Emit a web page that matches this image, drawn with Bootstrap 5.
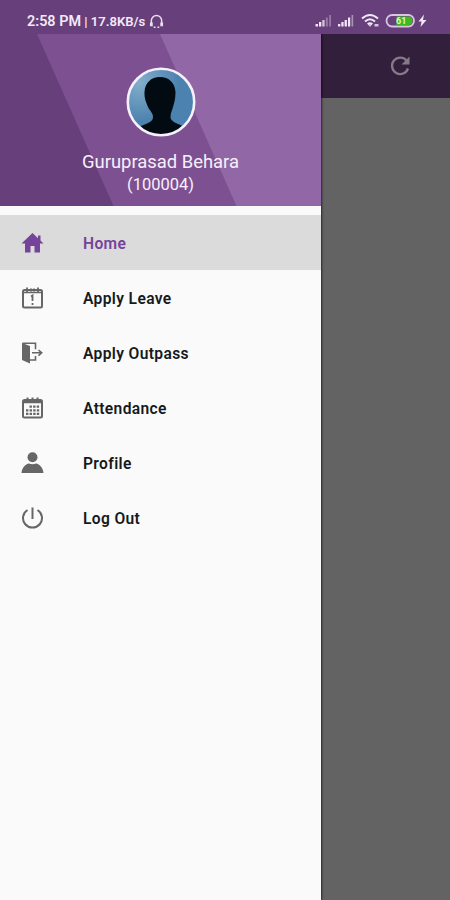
<!DOCTYPE html>
<html lang="en">
<head>
<meta charset="utf-8">
<meta name="viewport" content="width=device-width, initial-scale=1">
<title>Home</title>
<link href="https://cdn.jsdelivr.net/npm/bootstrap@5.3.0/dist/css/bootstrap.min.css" rel="stylesheet">
<style>
body{font-family:Roboto,"Liberation Sans",sans-serif;background:#636363}
.screen{width:450px;height:900px;background:#636363}
.statusbar{height:34px;background:#673f7a;color:#f3e9f8;padding:9px 22px 0 27px;z-index:2}
.clock{font-size:14.4px;line-height:25px;font-weight:600;white-space:pre}
.rate{font-size:13.1px}
.drawer{width:321px;background:#fafafa;box-shadow:1px 0 2px rgba(0,0,0,.6)}
.drawer-head{height:172px;padding-top:33px;color:#f7effb;background:#673f7a}
.stripes{width:321px;height:172px}
.avatar{width:70px;height:70px}
.who{font-size:18.4px;line-height:22px;margin-top:14px}
.code{font-size:16.5px;line-height:24px}
.menu{padding-top:9px}
.menu .list-group-item{height:55px;padding:2px 0 0 20px;background:transparent;color:#161a20;font-size:15.6px;letter-spacing:.36px;font-weight:600}
.menu .list-group-item.active{background:#dbdbdb;color:#75449a}
.menu .list-group-item span{padding-top:2px}
.menu svg{width:25px;height:26px;margin:-2px 38px 0 0;color:#666}
.menu .active svg{color:#75449a}
.topbar{height:64px;background:#321f3b;padding-right:38px}
</style>
</head>
<body>
<div class="screen d-flex flex-column overflow-hidden">
  <header class="statusbar position-relative d-flex justify-content-between align-items-start flex-shrink-0">
    <div class="d-flex align-items-center">
      <span class="clock">2:58 PM<span class="rate"> | 17.8KB/s</span></span>
      <svg class="ms-1" width="15" height="15" viewBox="0 0 16 15" fill="none" stroke="#eadcf1" stroke-width="1.6"><path d="M2.5 9V6.500a5.500 5.500 0 0 1 11 0V9"/><path d="M2.500 8.500v4M13.500 8.500v4" stroke-width="3"/><path d="M5 13.500h2M9 13.500h2"/></svg>
    </div>
    <svg width="114" height="25" viewBox="0 0 114 25" fill="#f0e6f5">
      <path d="M1.500 17.500v-2.500h2.500v2.500zM5 17.500v-4.500h2.300v4.500z"/><path d="M8.300 17.500v-6.500h2.300v6.500z" opacity=".8"/><path d="M11.800 17.500V8.500h2V17.500zM15.200 17.500V6h1.800v11.500z" opacity=".35"/>
      <path d="M24 17.500v-2.500h2.300v2.500zM27.300 17.500v-4.500h2.300v4.500zM30.600 17.500v-6.500h2.300v6.500zM34 17.500V8.500h2.200V17.500z"/><path d="M37.500 17.500V6h1.700v11.500z" opacity=".5"/>
      <g transform="translate(1.500 0)"><g fill="none" stroke="#f0e6f5" stroke-width="2.100"><path d="M46.500 9.500q8-7 16 0M49.500 12.500q5-4.500 10 0M52.200 15.300q2.300-2 4.600 0"/></g>
      <path d="M52.500 15.500h4l-2 2.500zM59 15h4v2.500h-4z" opacity=".8"/></g>
      <g transform="translate(1.500 0)"><rect x="71" y="6" width="27.500" height="11.500" rx="5.700" fill="none" stroke="#d9c4e2" stroke-width="1.800"/>
      <path d="M81 7.500h12a4 4 0 0 1 4 4.200 4 4 0 0 1-4 4.300H81z" fill="#3fb91d"/>
      <text x="80.500" y="15" font-size="9" font-weight="700" fill="#dff5cf">61</text>
      <path d="M108.500 5.500l-5.500 7h3l-1 5.500 6-7h-3.500z"/></g>
    </svg>
  </header>
  <div class="d-flex flex-grow-1">
    <aside class="drawer d-flex flex-column flex-shrink-0 position-relative">
      <div class="drawer-head position-relative d-flex flex-column align-items-center flex-shrink-0">
        <svg class="stripes position-absolute top-0 start-0" viewBox="0 0 321 172"><path d="M37 0H321V172H113.500z" fill="#7d5191"/><path d="M160 0H321V172H236.500z" fill="#9168a5"/></svg>
        <svg class="avatar position-relative flex-shrink-0" viewBox="0 0 70 70">
          <defs><clipPath id="face"><circle cx="35" cy="35" r="32.500"/></clipPath><radialGradient id="sky" cx=".18" cy=".2" r=".6"><stop offset="0" stop-color="#83aecb"/><stop offset="1" stop-color="#4c82af"/></radialGradient></defs>
          <circle cx="35" cy="35" r="33" fill="url(#sky)"/>
          <path clip-path="url(#face)" d="M34 10c-9 0-15 6-15.500 15-.2 7 1.500 10 3.500 15 2 4 5 6 5 10 0 5-5 6-13 9.500v10h45V60c-8-4-14.500-5-14.500-10 0-4 1.500-6 2.500-10 1.500-5 2.500-9 2.500-15C49 16 43 10 34 10z" fill="#020b12"/>
          <circle cx="35" cy="35" r="33.200" fill="none" stroke="#f5f0fa" stroke-width="2.600"/>
        </svg>
        <div class="who position-relative">Guruprasad Behara</div>
        <div class="code position-relative">(100004)</div>
      </div>
      <nav class="menu list-group list-group-flush">
        <a class="list-group-item active border-0 d-flex align-items-center"><svg viewBox="0 0 25 26"><path fill="currentColor" d="M12.500 3L1.500 13.500h3.500V22.500h5.500V16h4v6.500H20v-9h3.500L20.500 10.500V5.500h-2.500v2.700z"/></svg><span>Home</span></a>
        <a class="list-group-item border-0 d-flex align-items-center"><svg viewBox="0 0 25 26" fill="none" stroke="currentColor"><rect x="3" y="5" width="19" height="17.500" rx="1.500" stroke-width="2"/><path d="M3 7.500h19" stroke-width="1.500"/><path d="M7 2.500v5M18 2.500v5M11 3.500v3M14 3.500v3" stroke-width="1.800"/><path d="M11 11.500l1.500-1V16M12.500 18v2" stroke-width="1.800"/></svg><span>Apply Leave</span></a>
        <a class="list-group-item border-0 d-flex align-items-center"><svg viewBox="0 0 25 26" fill="none" stroke="currentColor"><path d="M2 3l8 3v17.500l-8-3.500z" fill="currentColor" stroke="none"/><path d="M2.500 3.200H15.500v6M15.500 16v4H10M12 12.800h9M18.500 10l3.200 2.800-3.200 2.800" stroke-width="1.600"/></svg><span>Apply Outpass</span></a>
        <a class="list-group-item border-0 d-flex align-items-center"><svg viewBox="0 0 25 26" fill="none" stroke="currentColor"><rect x="3" y="5" width="19" height="17.500" rx="1.500" stroke-width="2"/><path d="M3 7h19" stroke-width="2.500"/><path d="M7.500 2.500v4M12.500 2.500v4M17.500 2.500v4" stroke-width="2"/><path d="M9.500 11.700h10M6 15.300h13.500M6 18.900h13.500" stroke-width="2.300" stroke-dasharray="2.400 1.200"/></svg><span>Attendance</span></a>
        <a class="list-group-item border-0 d-flex align-items-center"><svg viewBox="0 0 25 26" fill="currentColor"><circle cx="12.500" cy="7.300" r="5"/><path d="M1.500 23c.5-5.500 4-9 7.500-9.500q3.500 1.500 7 0c3.500.5 7 4 7.500 9.500z"/></svg><span>Profile</span></a>
        <a class="list-group-item border-0 d-flex align-items-center"><svg viewBox="0 0 25 26" fill="none" stroke="currentColor" stroke-width="2"><path d="M12.500 2.500v11.500M7.500 5a9.500 9.500 0 1 0 10 0"/></svg><span>Log Out</span></a>
      </nav>
    </aside>
    <main class="flex-grow-1">
      <div class="topbar d-flex justify-content-end align-items-center">
        <svg width="24" height="24" viewBox="0 0 24 24" fill="none" stroke="#857a88" stroke-width="2.300"><path d="M18.500 6.500A8.200 8.200 0 1 0 20 14.500"/><path d="M21.500 2.500v8h-8z" fill="#857a88" stroke="none"/></svg>
      </div>
    </main>
  </div>
</div>
<script src="https://cdn.jsdelivr.net/npm/bootstrap@5.3.0/dist/js/bootstrap.bundle.min.js"></script>
</body>
</html>
